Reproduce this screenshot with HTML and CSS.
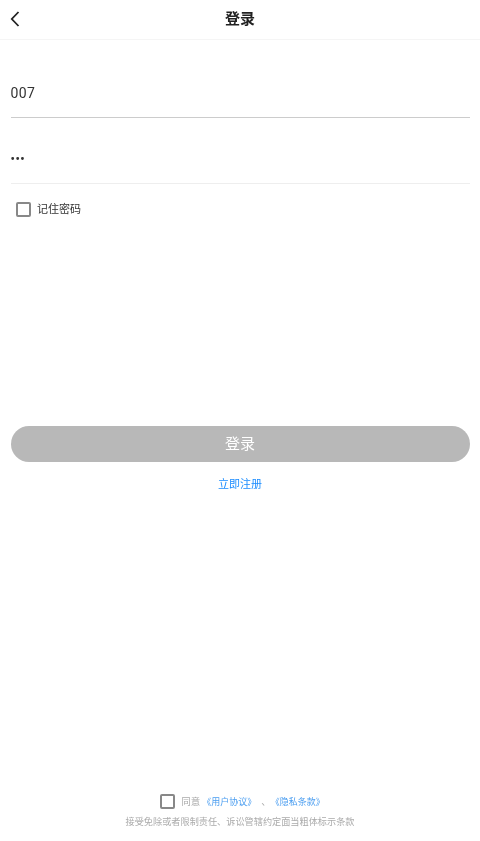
FILE: index.html
```html
<!DOCTYPE html>
<html lang="zh-CN">
<head>
	<meta charset="utf-8">
	<title>登录</title>
	<link rel="stylesheet" href="styles.css">
</head>
<body>
	<div class="page">
		<div class="header">
			<svg class="back" width="12" height="18" viewBox="0 0 12 18">
				<path d="M9.5 2 L2.8 9 L9.5 16" fill="none" stroke="#222" stroke-width="1.8"/>
			</svg>
			<div class="title">登录</div>
		</div>
		<div class="form">
			<div class="field field--active">007</div>
			<div class="field field--password">•••</div>
			<div class="remember">
				<span class="checkbox"></span>
				<span class="remember-text">记住密码</span>
			</div>
		</div>
		<div class="actions">
			<div class="login-btn">登录</div>
			<div class="register">立即注册</div>
		</div>
		<div class="footer">
			<div class="agree">
				<span class="checkbox checkbox--small"></span>
				<span class="agree-text">同意</span>
				<span class="link link--first">《用户协议》</span>
				<span class="agree-text agree-text--sep">、</span>
				<span class="link">《隐私条款》</span>
			</div>
			<div class="terms">接受免除或者限制责任、诉讼管辖约定面当粗体标示条款</div>
		</div>
	</div>
</body>
</html>
```

FILE: styles.css
```css
* {
	box-sizing: border-box;
}

html,
body {
	margin: 0;
	padding: 0;
	background: #fff;
}

body {
	font-family: "Roboto", "Noto Sans CJK SC", sans-serif;
	color: #222;
}

.page {
	display: flex;
	flex-direction: column;
	height: 841px;
	overflow: hidden;
	filter: blur(0.35px);
}

.header {
	display: flex;
	align-items: center;
	justify-content: center;
	position: relative;
	height: 40px;
	padding-bottom: 4px;
	border-bottom: 1px solid #f5f5f5;
}

.back {
	position: absolute;
	left: 9px;
	top: 9.5px;
}

.title {
	font-size: 15px;
	font-weight: 700;
	color: #222;
}

.form {
	padding: 0 10.5px;
}

.field {
	display: flex;
	align-items: center;
	font-size: 14px;
	letter-spacing: 0.4px;
	color: #333;
	border-bottom: 1px solid #eee;
}

.field--active {
	height: 78px;
	padding-top: 29px;
	border-bottom-color: #ccc;
}

.field--password {
	height: 66px;
	padding-top: 16px;
	font-size: 12px;
	letter-spacing: 0.6px;
	font-weight: 700;
}

.remember {
	display: flex;
	align-items: center;
	gap: 6px;
	padding: 17.5px 0 0 5.5px;
}

.checkbox {
	display: block;
	width: 15px;
	height: 15px;
	border: 2px solid #888;
	border-radius: 2px;
}

.remember-text {
	margin-top: -2px;
	font-size: 11px;
	color: #333;
}

.actions {
	padding: 0 10.5px;
	margin-top: 209.5px;
}

.login-btn {
	display: flex;
	align-items: center;
	justify-content: center;
	height: 36px;
	padding-bottom: 3px;
	border-radius: 18px;
	background: #b8b8b8;
	color: #fff;
	font-size: 15px;
}

.register {
	margin-top: 12.5px;
	text-align: center;
	font-size: 11px;
	color: #1a8cff;
}

.footer {
	margin-top: auto;
	padding-bottom: 13px;
	text-align: center;
}

.agree {
	display: flex;
	align-items: center;
	justify-content: center;
	padding-left: 5px;
	font-size: 9.5px;
	height: 16px;
}

.checkbox--small {
	margin-right: 6px;
}

.agree-text {
	color: #aaa;
}

.agree-text--sep {
	margin-left: 5px;
}

.link {
	font-size: 9px;
	color: #4a9df0;
}

.link--first {
	margin-left: 2px;
}

.terms {
	margin-top: 5px;
	font-size: 9.16px;
	color: #aaa;
}
```
